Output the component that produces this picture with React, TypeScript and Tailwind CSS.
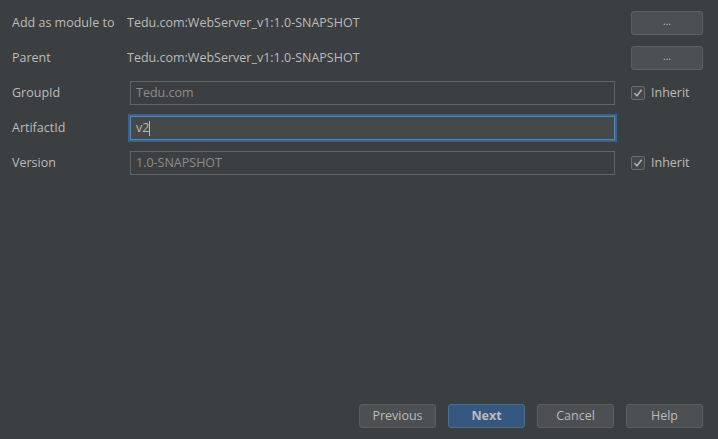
import React from "react";

const font = { fontFamily: '"Open Sans", "Noto Sans", sans-serif' };

const Checkbox: React.FC = () => (
  <div className="flex items-center gap-[6px]">
    <div className="w-[14px] h-[14px] rounded-[2px] border border-[#6b6b6b] bg-[#43494a] flex items-center justify-center">
      <svg width="10" height="10" viewBox="0 0 10 10" fill="none">
        <path d="M1.5 5.2 L4 7.8 L8.6 1.8" stroke="#b0b0b0" strokeWidth="1.6" />
      </svg>
    </div>
    <span className="text-[12.5px] text-[#bbbbbb]">Inherit</span>
  </div>
);

const DotsButton: React.FC = () => (
  <button className="w-[72px] h-[24px] rounded-[3px] border border-[#5e6060] bg-[#4c5052] text-[#bbbbbb] text-[10px] leading-none pb-[4px]">
    ...
  </button>
);

const Field: React.FC<{ value: string; focused?: boolean }> = ({ value, focused }) =>
  focused ? (
    <div className="h-[24px] border border-[#5a86b3] outline-2 outline-[#3b628a] bg-[#45494a] flex items-center px-[5px] text-[12.5px] text-[#bbbbbb]">
      {value}
      <span className="w-px h-[15px] bg-[#bbbbbb]" />
    </div>
  ) : (
    <div className="h-[24px] border border-[#646464] flex items-center px-[5px] text-[12.5px] text-[#8c8c8c]">
      {value}
    </div>
  );

const FooterButton: React.FC<{ label: string; primary?: boolean }> = ({ label, primary }) => (
  <button
    className={
      primary
        ? "w-[77px] h-[24px] rounded-[3px] border border-[#4c708c] bg-[#365880] text-[12.5px] font-bold text-[#bbbbbb]"
        : "w-[77px] h-[24px] rounded-[3px] border border-[#5e6060] bg-[#4c5052] text-[12.5px] text-[#bbbbbb]"
    }
  >
    {label}
  </button>
);

export default function App() {
  return (
    <div className="w-[718px] h-[439px] bg-[#3c3f41] flex flex-col pl-[12px] pr-[15px] pt-[11px] pb-[11px]" style={font}>
      <div className="grid grid-cols-[118px_485px_1fr] gap-y-[11px] items-center text-[12.5px] text-[#bbbbbb]">
        {/* Add as module to */}
        <div className="h-[24px] flex items-center">Add as module to</div>
        <div className="-ml-[3px]">Tedu.com:WebServer_v1:1.0-SNAPSHOT</div>
        <div className="pl-[16px]"><DotsButton /></div>

        {/* Parent */}
        <div className="h-[24px] flex items-center">Parent</div>
        <div className="-ml-[3px]">Tedu.com:WebServer_v1:1.0-SNAPSHOT</div>
        <div className="pl-[16px]"><DotsButton /></div>

        {/* GroupId */}
        <div>GroupId</div>
        <Field value="Tedu.com" />
        <div className="pl-[16px]"><Checkbox /></div>

        {/* ArtifactId */}
        <div>ArtifactId</div>
        <Field value="v2" focused />
        <div />

        {/* Version */}
        <div>Version</div>
        <Field value="1.0-SNAPSHOT" />
        <div className="pl-[16px]"><Checkbox /></div>
      </div>

      <div className="mt-auto flex justify-end gap-[12px]">
        <FooterButton label="Previous" />
        <FooterButton label="Next" primary />
        <FooterButton label="Cancel" />
        <FooterButton label="Help" />
      </div>
    </div>
  );
}
